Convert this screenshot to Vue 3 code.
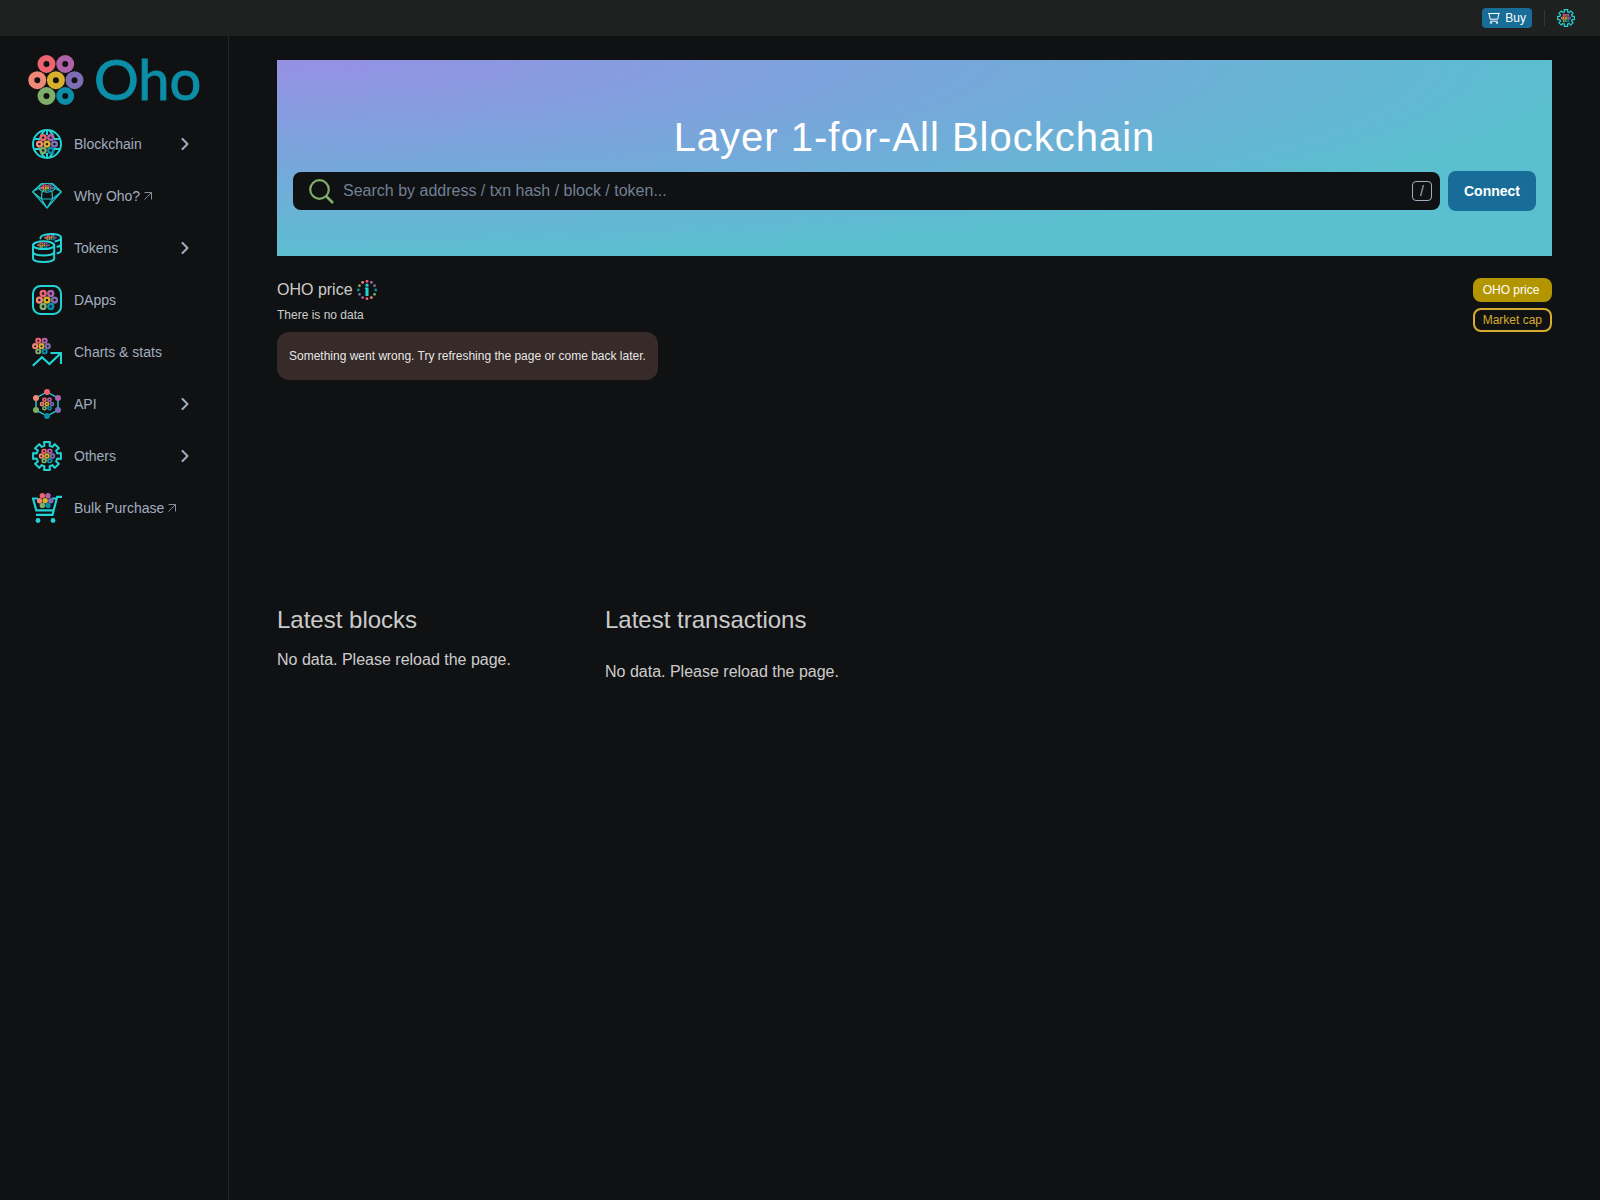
<script setup>
const nav = [
  { label: 'Blockchain', icon: 'globe', expandable: true },
  { label: 'Why Oho?', icon: 'diamond', external: true },
  { label: 'Tokens', icon: 'coins', expandable: true },
  { label: 'DApps', icon: 'apps' },
  { label: 'Charts & stats', icon: 'chart' },
  { label: 'API', icon: 'api', expandable: true },
  { label: 'Others', icon: 'gear', expandable: true },
  { label: 'Bulk Purchase', icon: 'cart', external: true }
]

const cluster = [
  { x: 18.5, y: 9, color: '#ec6470' },
  { x: 37.2, y: 9, color: '#b062a9' },
  { x: 9.3, y: 25.2, color: '#f08878' },
  { x: 27.9, y: 25.2, color: '#d8b02c' },
  { x: 46.5, y: 25.2, color: '#7c6db4' },
  { x: 18.5, y: 41, color: '#7fae6b' },
  { x: 37.2, y: 41, color: '#0c8da8' }
]

const polar = (deg, r) => {
  const a = (deg * Math.PI) / 180
  return `${(15 + r * Math.sin(a)).toFixed(2)},${(15 - r * Math.cos(a)).toFixed(2)}`
}

const gearPoints = Array.from({ length: 8 }, (_, k) => {
  const a = k * 45
  return [polar(a - 14, 10.6), polar(a - 12, 14.2), polar(a + 12, 14.2), polar(a + 14, 10.6)].join(' ')
}).join(' ')

const dotColors = ['#ec6470', '#b062a9', '#7c6db4', '#0c8da8', '#7fae6b', '#f08878']
const dots = Array.from({ length: 12 }, (_, k) => ({
  x: 10 + 8.7 * Math.sin((k * Math.PI) / 6),
  y: 10 - 8.7 * Math.cos((k * Math.PI) / 6),
  color: dotColors[k % 6]
}))
</script>

<template>
  <div class="page">
    <svg class="sprite" aria-hidden="true">
      <symbol id="cluster" viewBox="0 0 56 50">
        <circle v-for="(c, i) in cluster" :key="i" :cx="c.x" :cy="c.y" r="6" fill="none" :stroke="c.color" stroke-width="6" />
      </symbol>
      <symbol id="cluster-solid" viewBox="0 0 56 50">
        <circle v-for="(c, i) in cluster" :key="i" :cx="c.x" :cy="c.y" r="9" :fill="c.color" />
      </symbol>
      <symbol id="globe" viewBox="0 0 30 30">
        <g fill="none" stroke="#22d3d6" stroke-width="2">
          <circle cx="15" cy="15" r="14" />
          <path d="M12.500 1.500C10 4 8.500 7 8 10M17.500 1.500C20 4 21.500 7 22 10M12.500 28.500C10 26 8.500 23 8 20M17.500 28.500C20 26 21.500 23 22 20M15 1v5M15 24v5M2.500 10H8M22 10h5.500M2.500 20H8M22 20h5.500" />
        </g>
        <use href="#cluster" x="3.800" y="5" width="22.400" height="20" />
      </symbol>
      <symbol id="diamond" viewBox="0 0 30 30">
        <g fill="none" stroke="#1fc4c8" stroke-width="1.200" stroke-linejoin="round">
          <path d="M9.500 2.500h11L29.400 10.800 15 27 .6 10.800ZM.6 10.800 9.500 18h11l8.900-7.200M9.500 18 15 27l5.500-9M.6 10.800 7.500 7M29.400 10.800 22.500 7M10 10.500 9.500 18M20 10.500 20.500 18" />
          <ellipse cx="15" cy="6.800" rx="8" ry="4.300" />
        </g>
        <svg x="8" y="3.200" width="14" height="7.400" viewBox="0 0 56 50" preserveAspectRatio="none">
          <circle v-for="(c, i) in cluster" :key="i" :cx="c.x" :cy="c.y" r="6" fill="none" :stroke="c.color" stroke-width="6" />
        </svg>
      </symbol>
      <symbol id="coins" viewBox="0 0 30 30">
        <g fill="none" stroke="#22d3d6" stroke-width="2" stroke-linecap="round">
          <ellipse cx="11.600" cy="12.200" rx="10.600" ry="3.900" />
          <path d="M1 12.200V25.500c0 4.600 21.200 4.600 21.200 0V12.200M1 19c0 4.600 21.200 4.600 21.200 0" />
          <path d="M8.500 5.500C7 .2 29 -.8 29 4.500V17.500c0 1.300-1.400 2.200-3.500 2.700M29 4.500c0 2.200-2 3.200-5.500 3.800M29 11c0 1.500-1.500 2.300-3.500 2.800" />
        </g>
        <svg x="5" y="9.200" width="13" height="6" viewBox="0 0 56 50" preserveAspectRatio="none">
          <circle v-for="(c, i) in cluster" :key="i" :cx="c.x" :cy="c.y" r="6" fill="none" :stroke="c.color" stroke-width="6" />
        </svg>
        <svg x="12" y="2" width="13" height="5.600" viewBox="0 0 56 50" preserveAspectRatio="none">
          <circle v-for="(c, i) in cluster" :key="i" :cx="c.x" :cy="c.y" r="6" fill="none" :stroke="c.color" stroke-width="6" />
        </svg>
      </symbol>
      <symbol id="apps" viewBox="0 0 30 30">
        <rect x="1" y="1" width="28" height="28" rx="7.500" fill="none" stroke="#22d3d6" stroke-width="2" />
        <use href="#cluster" x="3.600" y="4.800" width="22.800" height="20.400" />
      </symbol>
      <symbol id="chart" viewBox="0 0 30 30">
        <use href="#cluster" x="0" y=".6" width="19" height="17" />
        <path d="M.8 28.800 10 20.300l7.400 6.800L28.500 16.500M18.500 16H29v11" fill="none" stroke="#22d3d6" stroke-width="2.200" />
      </symbol>
      <symbol id="api" viewBox="0 0 30 30">
        <path d="M15 3 26 9v12l-11 6-11-6V9Z" fill="none" stroke="#22d3d6" stroke-width="1.400" />
        <circle cx="15" cy="3" r="3" fill="#ec6470" />
        <circle cx="26" cy="9" r="3" fill="#b062a9" />
        <circle cx="26" cy="21" r="3" fill="#7c6db4" />
        <circle cx="15" cy="27" r="3" fill="#0c8da8" />
        <circle cx="4" cy="21" r="3" fill="#7fae6b" />
        <circle cx="4" cy="9" r="3" fill="#f08878" />
        <use href="#cluster" x="7.500" y="8.200" width="15" height="13.600" />
      </symbol>
      <symbol id="gear" viewBox="0 0 30 30">
        <polygon :points="gearPoints" fill="none" stroke="#22d3d6" stroke-width="2" stroke-linejoin="round" />
        <use href="#cluster" x="6.500" y="7.400" width="17" height="15.200" />
      </symbol>
      <symbol id="cart" viewBox="0 0 30 30">
        <path d="M6 5.500H1L4.300 17.300H21M20 5.500H24M30 3.800H25.200L20.500 21.800H4" fill="none" stroke="#22d3d6" stroke-width="2.200" />
        <circle cx="6" cy="27.500" r="2.400" fill="#22d3d6" />
        <circle cx="21" cy="27.500" r="2.400" fill="#22d3d6" />
        <use href="#cluster-solid" x="4.700" y="0" width="17" height="15.200" />
      </symbol>
    </svg>

    <header class="topbar">
      <button class="buy" type="button">
        <svg width="12" height="12" viewBox="0 0 12 12" fill="none" stroke="#fff" aria-hidden="true">
          <path d="M0 1.500h11.500M1 1.500l1.200 5.700h7.500L11 .8M2.200 9.200h7.500" />
          <circle cx="3" cy="10.800" r=".7" /><circle cx="9" cy="10.800" r=".7" />
        </svg>
        Buy
      </button>
      <span class="divider"></span>
      <button class="settings" type="button" aria-label="Settings">
        <svg width="18" height="18" aria-hidden="true"><use href="#gear" /></svg>
      </button>
    </header>

    <div class="body">
      <aside class="sidebar">
        <a class="logo" href="#">
          <svg width="56" height="50" aria-hidden="true"><use href="#cluster" /></svg>
          <span class="wordmark">Oho</span>
        </a>
        <nav>
          <a v-for="item in nav" :key="item.label" class="nav-item" href="#">
            <svg class="nav-icon" width="30" height="30" aria-hidden="true"><use :href="'#' + item.icon" /></svg>
            <span class="nav-label">{{ item.label }}</span>
            <svg v-if="item.external" class="external" width="8" height="8" viewBox="0 0 8 8" fill="none" stroke="currentColor" aria-hidden="true">
              <path d="M.5 7.500l7-7M.5 .5h7V7.500" />
            </svg>
            <svg v-if="item.expandable" class="chevron" width="8" height="12" viewBox="0 0 8 12" fill="none" stroke="currentColor" stroke-width="2" stroke-linecap="round" stroke-linejoin="round" aria-hidden="true">
              <path d="M1.500 1l5 5-5 5" />
            </svg>
          </a>
        </nav>
      </aside>

      <main class="content">
        <section class="hero">
          <h1>Layer 1-for-All Blockchain</h1>
          <form class="search-row" @submit.prevent>
            <label class="search">
              <svg width="25" height="25" viewBox="0 0 25 25" fill="none" stroke="#7fae6b" stroke-width="2.200" aria-hidden="true">
                <circle cx="10.500" cy="10.500" r="9.300" />
                <path d="M17 17l7 7" stroke-width="2.600" />
              </svg>
              <input type="text" placeholder="Search by address / txn hash / block / token..." aria-label="Search" />
              <kbd>/</kbd>
            </label>
            <button class="connect" type="button">Connect</button>
          </form>
        </section>

        <section class="price">
          <div class="price-main">
            <h2>
              OHO price
              <svg width="20" height="20" viewBox="0 0 20 20" aria-hidden="true">
                <circle v-for="(d, i) in dots" :key="i" :cx="d.x" :cy="d.y" r="1.400" :fill="d.color" />
                <circle cx="10" cy="5.200" r="1.600" fill="#22d3d6" />
                <path d="M8 7.500h3.500V16h-3V9H8Z" fill="#22d3d6" />
              </svg>
            </h2>
            <p class="empty">There is no data</p>
            <div class="alert" role="alert">Something went wrong. Try refreshing the page or come back later.</div>
          </div>
          <div class="toggles">
            <button class="toggle active" type="button">OHO price</button>
            <button class="toggle" type="button">Market cap</button>
          </div>
        </section>

        <div class="latest">
          <section class="blocks">
            <h3>Latest blocks</h3>
            <p>No data. Please reload the page.</p>
          </section>
          <section class="transactions">
            <h3>Latest transactions</h3>
            <p>No data. Please reload the page.</p>
          </section>
        </div>
      </main>
    </div>
  </div>
</template>

<style>
body {
  margin: 0;
  background: #101112;
}
</style>

<style scoped>
.page {
  display: flex;
  flex-direction: column;
  min-height: 100vh;
  color: rgba(255, 255, 255, 0.8);
  font-family: "Liberation Sans", Arial, sans-serif;
  font-size: 16px;
  line-height: 24px;
}
.page * {
  box-sizing: border-box;
}
.sprite {
  position: absolute;
  width: 0;
  height: 0;
}
h1, h2, h3, p {
  margin: 0;
  font-weight: 400;
}
a {
  color: inherit;
  text-decoration: none;
}
button {
  font-family: inherit;
  border: 0;
  padding: 0;
  cursor: pointer;
}
.topbar {
  display: flex;
  align-items: center;
  justify-content: flex-end;
  gap: 12px;
  height: 36px;
  padding: 0 25px;
  background: #1e211f;
}
.buy {
  display: flex;
  align-items: center;
  gap: 5px;
  height: 20px;
  padding: 0 6px;
  border-radius: 4px;
  background: #176d98;
  color: #fff;
  font-size: 12px;
}
.divider {
  width: 1px;
  height: 16px;
  background: #343635;
}
.settings {
  display: flex;
  background: none;
}
.body {
  display: flex;
  flex: 1;
}
.sidebar {
  flex: none;
  width: 229px;
  border-right: 1px solid #242627;
}
.logo {
  display: flex;
  align-items: center;
  gap: 10px;
  height: 82px;
  padding: 6px 0 0 28px;
}
.wordmark {
  padding-bottom: 2px;
  color: #0c8da8;
  font-family: Lato, sans-serif;
  font-size: 56px;
  line-height: 56px;
  -webkit-text-stroke: 1px #0c8da8;
}
.nav-item {
  display: flex;
  align-items: center;
  height: 52px;
  padding: 0 39px 0 32px;
  color: #a0aec0;
  font-size: 14px;
}
.nav-icon {
  margin-right: 12px;
}
.external {
  margin-left: 4px;
  opacity: 0.8;
}
.chevron {
  margin-left: auto;
}
.content {
  flex: 1;
  min-width: 0;
  padding: 24px 48px;
}
.hero {
  padding: 53px 16px 45px;
  background: radial-gradient(103% 103% at 0 0, #9690e4 0%, #72abd9 60%, #5abfcf 100%);
}
h1 {
  margin-bottom: 10px;
  color: #fff;
  font-size: 40px;
  line-height: 48px;
  letter-spacing: 1px;
  text-align: center;
}
.search-row {
  display: flex;
  align-items: center;
  gap: 8px;
}
.search {
  display: flex;
  flex: 1;
  align-items: center;
  height: 38px;
  padding: 0 8px 0 16px;
  border-radius: 8px;
  background: #101112;
}
.search input {
  flex: 1;
  min-width: 0;
  padding: 0 9px;
  border: 0;
  outline: 0;
  background: none;
  color: #fff;
  font: inherit;
}
.search input::placeholder {
  color: #718096;
  opacity: 1;
}
kbd {
  width: 20px;
  height: 20px;
  border: 1px solid #a0aec0;
  border-radius: 4px;
  color: #a0aec0;
  font-family: inherit;
  font-size: 14px;
  line-height: 18px;
  text-align: center;
}
.connect {
  width: 88px;
  height: 40px;
  border-radius: 8px;
  background: #176d98;
  color: #fff;
  font-size: 14px;
  font-weight: 700;
}
.price {
  display: flex;
  justify-content: space-between;
  min-height: 348px;
  padding-top: 22px;
}
h2 {
  display: flex;
  align-items: center;
  gap: 4px;
  font-size: 16px;
}
.empty {
  margin-top: 1px;
  font-size: 12px;
}
.alert {
  margin-top: 5px;
  padding: 12px;
  border-radius: 12px;
  background: #362b29;
  color: rgba(255, 255, 255, 0.9);
  font-size: 12px;
}
.toggles {
  display: flex;
  flex-direction: column;
  gap: 6px;
}
.toggle {
  height: 24px;
  padding: 0 8px;
  border: 2px solid #d6ae2f;
  border-radius: 8px;
  background: none;
  color: #d6ae2f;
  font-size: 12px;
  text-align: left;
}
.toggle.active {
  border-color: #b39500;
  background: #b39500;
  color: #fff;
}
.latest {
  display: flex;
  gap: 48px;
}
.blocks {
  width: 280px;
}
.transactions {
  flex: 1;
}
h3 {
  font-size: 24px;
  line-height: 32px;
}
.latest p {
  margin-top: 12px;
}
.latest .transactions p {
  margin-top: 24px;
}
</style>
